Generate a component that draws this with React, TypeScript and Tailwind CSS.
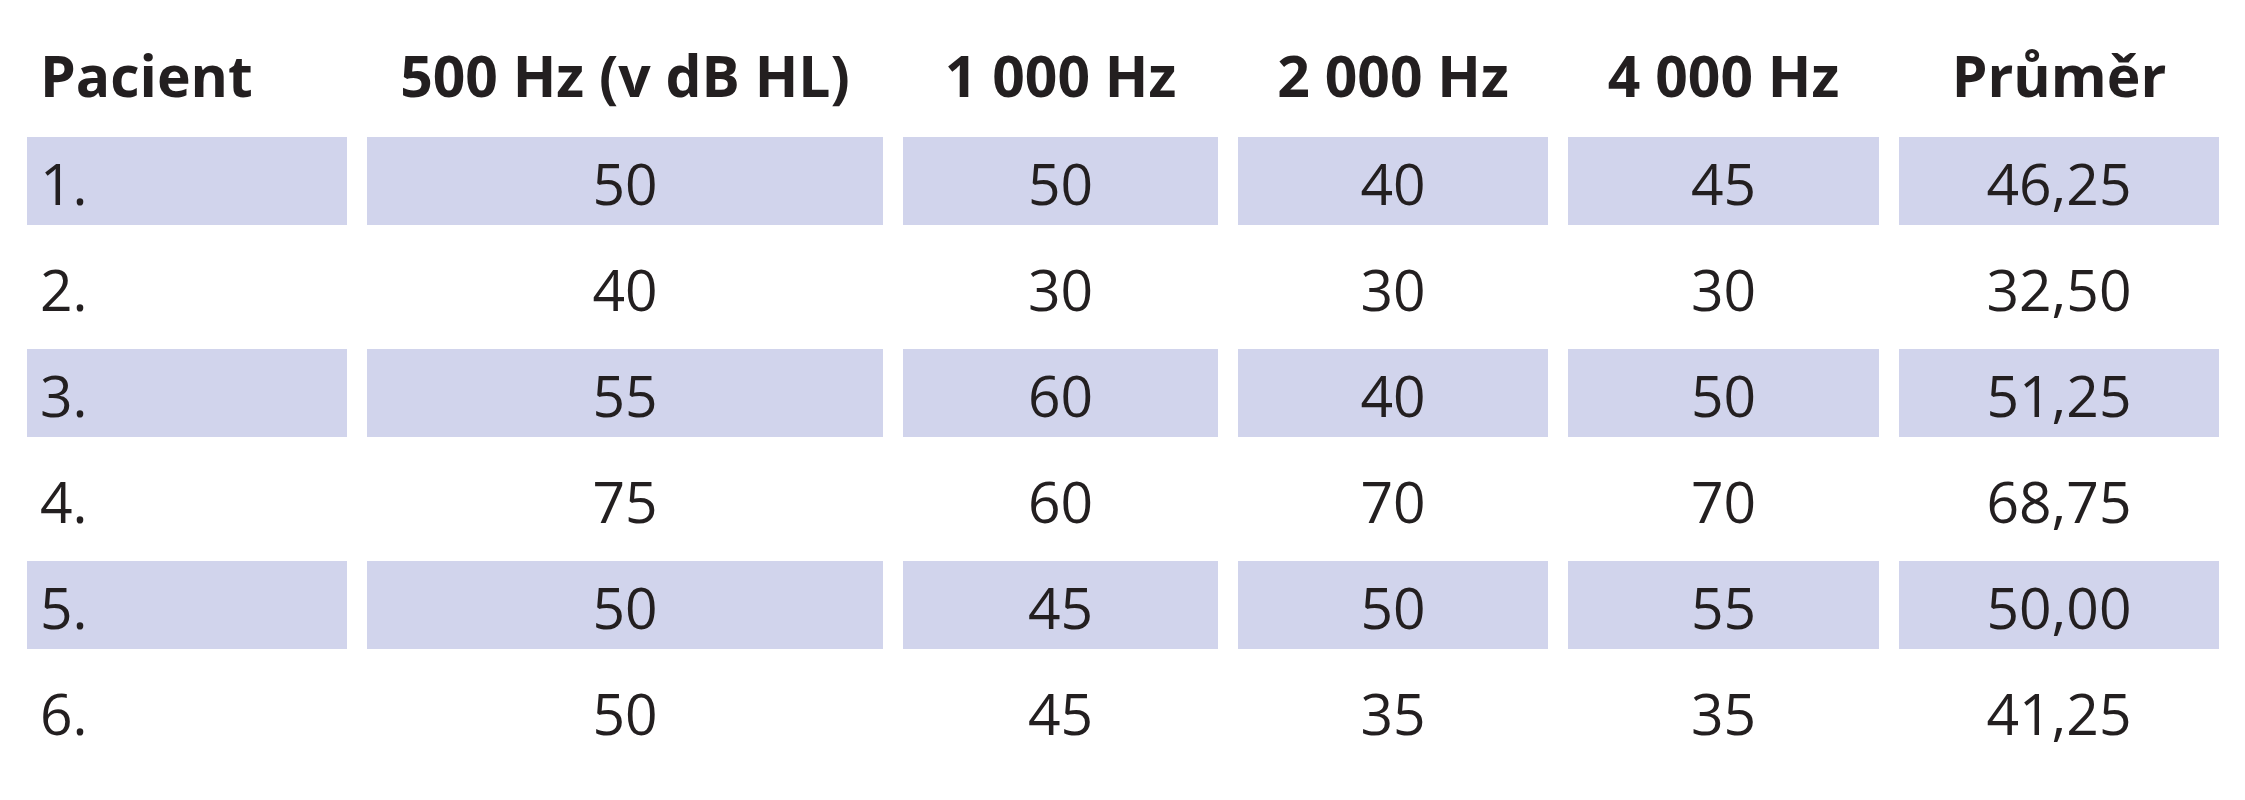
import React from "react";

type Row = {
  patient: string;
  values: string[];
  avg: string;
};

const headers = ["500 Hz (v dB HL)", "1 000 Hz", "2 000 Hz", "4 000 Hz"];

const rows: Row[] = [
  { patient: "1.", values: ["50", "50", "40", "45"], avg: "46,25" },
  { patient: "2.", values: ["40", "30", "30", "30"], avg: "32,50" },
  { patient: "3.", values: ["55", "60", "40", "50"], avg: "51,25" },
  { patient: "4.", values: ["75", "60", "70", "70"], avg: "68,75" },
  { patient: "5.", values: ["50", "45", "50", "55"], avg: "50,00" },
  { patient: "6.", values: ["50", "45", "35", "35"], avg: "41,25" },
];

export default function App() {
  return (
    <div
      className="min-h-[800px] w-[2245px] bg-white pl-[27px] pt-[31px] text-[#231f20]"
      style={{ fontFamily: '"Open Sans", "Noto Sans", sans-serif' }}
    >
      <div className="grid grid-cols-[320px_516px_315px_310px_311px_320px] auto-rows-[88px] gap-x-[20px] gap-y-[18px] text-[57px] leading-none">
        {/* header */}
        <div className="flex items-center pl-[13px] font-bold">Pacient</div>
        {headers.map((h) => (
          <div key={h} className="flex items-center justify-center font-bold">
            {h}
          </div>
        ))}
        <div className="flex items-center justify-center font-bold">Průměr</div>

        {rows.map((row, i) => {
          const band = i % 2 === 0 ? "bg-[#d1d4ec]" : "";
          return (
            <React.Fragment key={row.patient}>
              <div className={`flex items-center pl-[13px] pt-[4px] ${band}`}>
                {row.patient}
              </div>
              {row.values.map((v, j) => (
                <div
                  key={j}
                  className={`flex items-center justify-center pt-[4px] ${band}`}
                >
                  {v}
                </div>
              ))}
              <div className={`flex items-center justify-center pt-[4px] ${band}`}>
                {row.avg}
              </div>
            </React.Fragment>
          );
        })}
      </div>
    </div>
  );
}
